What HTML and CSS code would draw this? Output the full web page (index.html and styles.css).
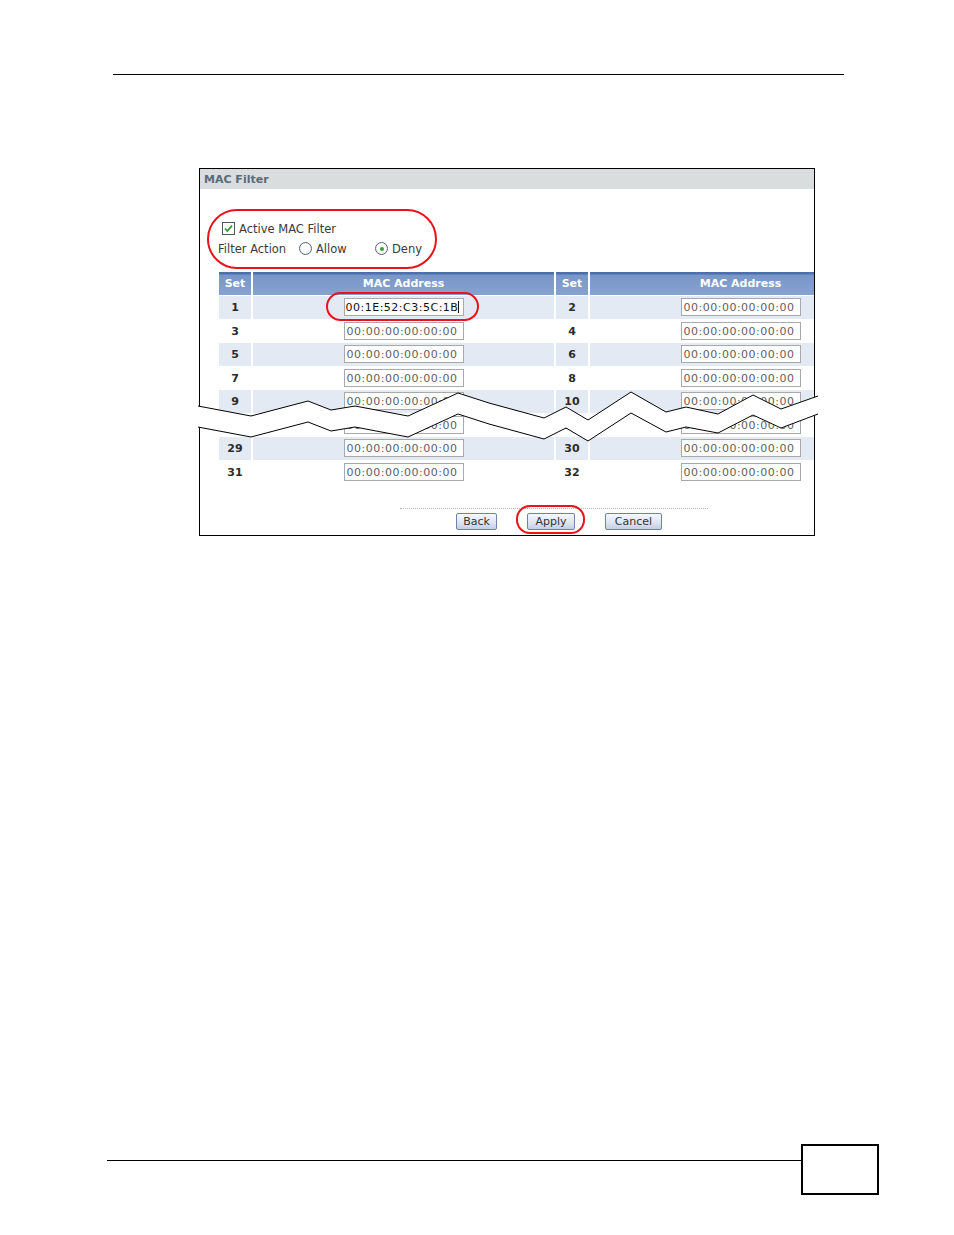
FILE: index.html
```html
<!DOCTYPE html>
<html>
<head>
<meta charset="utf-8">
<title>MAC Filter</title>
<link rel="stylesheet" href="styles.css">
</head>
<body>
<div class="page">
  <div class="top-rule"></div>

  <div class="figure">
    <div class="shot">
      <div class="titlebar">MAC Filter</div>

      <div class="options">
        <div class="opt-row check-row">
          <span class="checkbox">
            <svg width="13" height="13" viewBox="0 0 13 13"><rect x="0.5" y="0.5" width="12" height="12" fill="#fff" stroke="#4c5866"/><path d="M3 6.5 L5.3 9 L10 3.6" fill="none" stroke="#2d9a2d" stroke-width="1.8"/></svg>
          </span>
          <span class="opt-text">Active MAC Filter</span>
        </div>
        <div class="opt-row action-row">
          <span class="action-label">Filter Action</span>
          <span class="radio-opt allow"><span class="radio"></span><span class="opt-text">Allow</span></span>
          <span class="radio-opt"><span class="radio on"></span><span class="opt-text">Deny</span></span>
        </div>
      </div>

      <div class="mac-table">
        <div class="row head">
          <div class="th">Set</div><div class="th">MAC Address</div><div class="th">Set</div><div class="th">MAC Address</div>
        </div>
        <div class="row alt">
          <div class="set">1</div><div class="mac"><span class="mac-in active">00:1E:52:C3:5C:1B<span class="caret"></span></span></div>
          <div class="set">2</div><div class="mac"><span class="mac-in">00:00:00:00:00:00</span></div>
        </div>
        <div class="row">
          <div class="set">3</div><div class="mac"><span class="mac-in">00:00:00:00:00:00</span></div>
          <div class="set">4</div><div class="mac"><span class="mac-in">00:00:00:00:00:00</span></div>
        </div>
        <div class="row alt">
          <div class="set">5</div><div class="mac"><span class="mac-in">00:00:00:00:00:00</span></div>
          <div class="set">6</div><div class="mac"><span class="mac-in">00:00:00:00:00:00</span></div>
        </div>
        <div class="row">
          <div class="set">7</div><div class="mac"><span class="mac-in">00:00:00:00:00:00</span></div>
          <div class="set">8</div><div class="mac"><span class="mac-in">00:00:00:00:00:00</span></div>
        </div>
        <div class="row alt">
          <div class="set">9</div><div class="mac"><span class="mac-in">00:00:00:00:00:00</span></div>
          <div class="set">10</div><div class="mac"><span class="mac-in">00:00:00:00:00:00</span></div>
        </div>
        <div class="row">
          <div class="set">27</div><div class="mac"><span class="mac-in">00:00:00:00:00:00</span></div>
          <div class="set">28</div><div class="mac"><span class="mac-in">00:00:00:00:00:00</span></div>
        </div>
        <div class="row alt">
          <div class="set">29</div><div class="mac"><span class="mac-in">00:00:00:00:00:00</span></div>
          <div class="set">30</div><div class="mac"><span class="mac-in">00:00:00:00:00:00</span></div>
        </div>
        <div class="row">
          <div class="set">31</div><div class="mac"><span class="mac-in">00:00:00:00:00:00</span></div>
          <div class="set">32</div><div class="mac"><span class="mac-in">00:00:00:00:00:00</span></div>
        </div>
      </div>

      <div class="sep"></div>
      <div class="buttons">
        <span class="btn btn-back">Back</span>
        <span class="btn btn-apply">Apply</span>
        <span class="btn btn-cancel">Cancel</span>
      </div>
    </div>

    <svg class="break" width="620" height="60" viewBox="0 0 620 60">
      <polygon fill="#fff" points="0,18 53,28 110,13 133,22 157,18 210,28 260,5 291,15 346,30 368,19 390,32 433,4 468,24 488,19 520,26 555,7 583,21 620,8 620,26 583,40 555,27 520,45 488,39 468,44 433,25 390,53 368,40 346,51 291,36 260,26 210,49 157,39 133,43 110,34 53,49 0,39"/>
      <polyline fill="none" stroke="#000" stroke-width="1" points="0,18 53,28 110,13 133,22 157,18 210,28 260,5 291,15 346,30 368,19 390,32 433,4 468,24 488,19 520,26 555,7 583,21 620,8"/>
      <polyline fill="none" stroke="#000" stroke-width="1" points="0,39 53,49 110,34 133,43 157,39 210,49 260,26 291,36 346,51 368,40 390,53 433,25 468,44 488,39 520,45 555,27 583,40 620,26"/>
    </svg>

    <div class="ring ring-opts"></div>
    <div class="ring ring-mac"></div>
    <div class="ring ring-apply"></div>
  </div>

  <div class="footer">
    <div class="foot-rule"></div>
    <div class="page-box"></div>
  </div>
</div>
</body>
</html>
```

FILE: styles.css
```css
html, body {
  margin: 0;
  padding: 0;
  background: #fff;
}

.page {
  width: 954px;
  height: 1235px;
  padding-top: 74px;
  box-sizing: border-box;
  font-family: "DejaVu Sans", Verdana, sans-serif;
  overflow: hidden;
}

.top-rule {
  margin-left: 113px;
  width: 731px;
  border-top: 1.5px solid #000;
}

.figure {
  position: relative;
  margin-top: 92.5px;
  margin-left: 199px;
  width: 616px;
  height: 368px;
}

.shot {
  width: 614px;
  height: 366px;
  border: 1px solid #000;
  overflow: hidden;
  background: #fff;
}

.titlebar {
  height: 20px;
  line-height: 22px;
  background: #d9dddd;
  color: #5b6a7a;
  font-size: 11px;
  font-weight: bold;
  padding-left: 4px;
}

.options {
  margin-top: 30px;
  color: #3a3a3a;
  font-size: 11.5px;
}

.opt-row {
  height: 20px;
  display: flex;
  align-items: center;
}

.check-row {
  padding-left: 22px;
}

.checkbox {
  width: 13px;
  height: 13px;
  display: block;
  margin-right: 4px;
}

.checkbox svg {
  display: block;
}

.action-row {
  padding-left: 18px;
}

.action-label {
  width: 81px;
}

.radio-opt {
  display: flex;
  align-items: center;
}

.radio-opt.allow {
  width: 76px;
}

.radio {
  width: 13px;
  height: 13px;
  box-sizing: border-box;
  border: 1px solid #5c6670;
  border-radius: 50%;
  background: radial-gradient(circle at 50% 40%, #fff 40%, #dde2e8 100%);
  margin-right: 4px;
  position: relative;
}

.radio.on::after {
  content: "";
  position: absolute;
  left: 3.5px;
  top: 3.5px;
  width: 4px;
  height: 4px;
  border-radius: 50%;
  background: #2fa12f;
}

.mac-table {
  margin-top: 13px;
  margin-left: 19px;
  width: 670px;
}

.row {
  display: grid;
  grid-template-columns: 32px 301px 32px 301px;
  column-gap: 2px;
  height: 23.5px;
}

.row.head {
  height: 21px;
  margin-bottom: 3px;
}

.th {
  background: linear-gradient(#4d70ac 0, #4d70ac 2px, #7896c8 3px, #86a2cf 100%);
  color: #fff;
  font-size: 11px;
  font-weight: bold;
  text-align: center;
  line-height: 23px;
}

.set {
  display: flex;
  align-items: center;
  justify-content: center;
  font-size: 11px;
  font-weight: bold;
  color: #2b2b2b;
  padding-top: 1px;
  box-sizing: border-box;
}

.mac {
  display: flex;
  align-items: center;
  justify-content: center;
}

.row.alt .set,
.row.alt .mac {
  background: #e3eaf3;
}

.mac-in {
  display: block;
  width: 120px;
  height: 18px;
  box-sizing: border-box;
  border: 1px solid #a9a9ad;
  background: #fff;
  font-size: 11px;
  letter-spacing: 0.5px;
  line-height: 17px;
  padding-left: 2px;
  color: #5f5f5f;
  white-space: nowrap;
  overflow: hidden;
}

.mac-in.active {
  color: #111;
  padding-left: 1px;
}

.caret {
  display: inline-block;
  width: 1px;
  height: 12px;
  background: #111;
  vertical-align: -2px;
}

.sep {
  margin-top: 24px;
  margin-left: 200px;
  width: 308px;
  border-top: 1px dotted #b5b5b5;
}

.buttons {
  margin-top: 4px;
  margin-left: 256px;
  display: flex;
  gap: 30px;
}

.btn {
  display: block;
  height: 17px;
  box-sizing: border-box;
  border: 1px solid #6f83aa;
  border-radius: 2px;
  background: linear-gradient(#f6f8fc 0%, #dfe6f2 55%, #c3cfe4 100%);
  color: #333;
  font-size: 11px;
  line-height: 16px;
  text-align: center;
}

.btn-back { width: 41px; }
.btn-apply { width: 48px; }
.btn-cancel { width: 57px; }

.break {
  position: absolute;
  left: -1px;
  top: 220px;
  display: block;
}

.ring {
  position: absolute;
  box-sizing: border-box;
  border: 2.5px solid #e8131b;
}

.ring-opts {
  left: 8px;
  top: 41px;
  width: 230px;
  height: 60px;
  border-radius: 30px;
}

.ring-mac {
  left: 127px;
  top: 124px;
  width: 153px;
  height: 29px;
  border-radius: 15px;
}

.ring-apply {
  left: 317px;
  top: 337px;
  width: 69px;
  height: 29px;
  border-radius: 14px;
}

.footer {
  margin-top: 608.5px;
  margin-left: 107px;
  display: flex;
  align-items: flex-start;
}

.foot-rule {
  width: 694px;
  margin-top: 16px;
  border-top: 1.5px solid #000;
}

.page-box {
  width: 78px;
  height: 51px;
  box-sizing: border-box;
  border: 2px solid #000;
}
```
